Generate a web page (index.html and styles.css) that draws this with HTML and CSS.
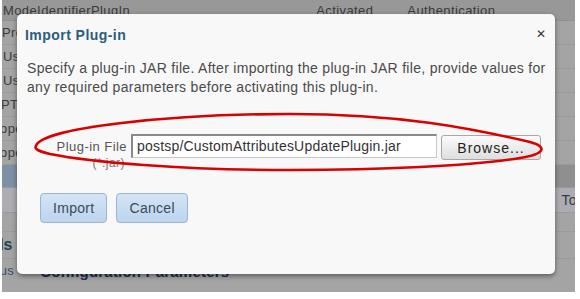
FILE: index.html
```html
<!DOCTYPE html>
<html>
<head>
<meta charset="utf-8">
<link rel="stylesheet" href="styles.css">
</head>
<body>
<div class="screen">
  <div class="page">
    <div class="row head">
      <span class="c1">ModeIdentifierPlugIn</span>
      <span class="c2">Activated</span>
      <span class="c3">Authentication</span>
    </div>
    <div class="row"><span class="c1 in1">Properties</span></div>
    <div class="row"><span class="c1 in2">Users</span></div>
    <div class="row"><span class="c1 in2">Users</span></div>
    <div class="row"><span class="c1 in0">PTS</span></div>
    <div class="row"><span class="c1 neg">operations</span></div>
    <div class="row"><span class="c1 neg">operations</span></div>
    <div class="row band"><span class="blue"></span></div>
    <div class="row tall"><span class="cr">To</span></div>
    <div class="row gap"></div>
    <div class="row sect"><span class="c1 bold">Details</span></div>
    <div class="row last"><span class="c1 status">Status</span><span class="cfg">Configuration Parameters</span></div>
  </div>

  <div class="dialog">
    <div class="dhead">
      <span class="title">Import Plug-in</span>
      <span class="close">&#x2715;</span>
    </div>
    <p class="desc">Specify a plug-in JAR file. After importing the plug-in JAR file, provide values for any required parameters before activating this plug-in.</p>
    <div class="field">
      <label class="flabel">Plug-in File<span class="sub">(*.jar)</span></label>
      <div class="input">postsp/CustomAttributesUpdatePlugin.jar</div>
      <div class="browse">Browse...</div>
    </div>
    <div class="actions">
      <div class="btn">Import</div>
      <div class="btn">Cancel</div>
    </div>
  </div>

  <svg class="mark" width="575" height="293" viewBox="0 0 575 293">
    <path d="M 36 146 C 40 128, 170 114, 290 114 C 400 114, 470 128, 530 142 C 548 147, 545 154, 520 158 C 470 166, 380 170, 290 170 C 180 170, 90 162, 50 154 C 38 151, 34 149, 36 146 Z" fill="none" stroke="#d90000" stroke-width="2.6"/>
  </svg>
</div>
</body>
</html>
```

FILE: styles.css
```css
html, body {
  margin: 0;
  padding: 0;
  background: #ffffff;
}
body {
  font-family: "Liberation Sans", Arial, sans-serif;
  width: 580px;
  height: 299px;
  overflow: hidden;
}
.screen {
  position: relative;
  width: 573px;
  height: 292px;
  margin-left: 2px;
  background: #a4a4a4;
  overflow: hidden;
}
.page {
  display: flex;
  flex-direction: column;
}
.row {
  height: 23px;
  display: flex;
  align-items: center;
  position: relative;
  border-bottom: 1px solid #9a9a9a;
  font-size: 13px;
  letter-spacing: 0.4px;
  color: #3a3a3a;
  white-space: nowrap;
}
.row.head {
  height: 20px;
  background: #989898;
  border-bottom: 1px solid #8f8f8f;
}
.c1 { padding-left: 1px; }
.in1 { padding-left: 0; }
.in2 { padding-left: 1px; }
.in0 { margin-left: -2px; }
.neg { margin-left: -3px; }
.c2 { margin-left: 186px; }
.c3 { margin-left: 34px; }
.band {
  height: 22px;
  background: #8f8f8f;
}
.band .blue {
  width: 40px;
  height: 100%;
  background: #7d90a6;
}
.tall {
  height: 24px;
  background: #acacb2;
  justify-content: flex-end;
}
.cr {
  margin-right: -2px;
  font-size: 14px;
}
.gap { height: 18px; border-bottom: none; }
.sect {
  height: 26px;
  border-top: 1px solid #9a9a9a;
}
.bold {
  font-weight: bold;
  font-size: 16px;
  color: #2a4350;
  margin-left: -43px;
  letter-spacing: 0;
}
.last {
  height: 26px;
  border-bottom: none;
  align-items: flex-start;
  padding-top: 4px;
}
.status {
  color: #3a4a6a;
  margin-left: -28px;
}
.cfg {
  margin-left: 26px;
  font-weight: bold;
  font-size: 15px;
  letter-spacing: 0.2px;
  color: #1d2b50;
}

.dialog {
  position: absolute;
  left: 15px;
  top: 14px;
  width: 538px;
  height: 260px;
  box-sizing: border-box;
  background: #f8f8f8;
  border-radius: 5px;
  box-shadow: 0 2px 5px rgba(0,0,0,0.45);
  padding: 0 4px 0 10px;
}
.dhead {
  display: flex;
  justify-content: space-between;
  align-items: center;
  height: 40px;
  margin-left: -2px;
  margin-right: 6px;
}
.title {
  font-weight: bold;
  font-size: 14px;
  letter-spacing: 0.45px;
  color: #2b5d7c;
  margin-top: 2px;
}
.close {
  font-size: 12px;
  color: #333;
  margin-right: -1px;
  margin-top: 0px;
  font-family: "DejaVu Sans", sans-serif;
}
.desc {
  margin: 5px 0 0 0;
  font-size: 14px;
  letter-spacing: 0.3px;
  line-height: 19px;
  color: #4a4a4a;
}
.field {
  display: flex;
  align-items: flex-start;
  margin-top: 37px;
  height: 37px;
}
.flabel {
  width: 74px;
  margin-left: 26px;
  font-size: 13px;
  letter-spacing: 0.45px;
  color: #555;
  line-height: 17px;
  margin-top: 4px;
  display: flex;
  flex-direction: column;
  align-items: flex-end;
  text-align: right;
}
.sub {
  color: #777;
  font-size: 12px;
  margin-right: 2px;
}
.input {
  margin-left: 4px;
  width: 306px;
  height: 24px;
  box-sizing: border-box;
  background: #fff;
  border: 1px solid #c8c8c8;
  border-top: 2px solid #8a8a8a;
  border-left: 2px solid #8a8a8a;
  font-size: 14px;
  letter-spacing: 0.2px;
  color: #333;
  padding: 2px 0 0 4px;
  white-space: nowrap;
  overflow: hidden;
}
.browse {
  margin-left: 4px;
  width: 100px;
  height: 25px;
  box-sizing: border-box;
  border: 1px solid #a8a8a8;
  border-radius: 3px;
  background: linear-gradient(#fbfbfb, #dedede);
  font-size: 14px;
  letter-spacing: 1px;
  color: #222;
  display: flex;
  align-items: center;
  justify-content: center;
  margin-top: 1px;
}
.actions {
  display: flex;
  gap: 9px;
  margin-top: 22px;
  margin-left: 13px;
}
.btn {
  height: 30px;
  box-sizing: border-box;
  padding: 0 12px;
  border: 1px solid #9ab6d3;
  border-radius: 4px;
  background: linear-gradient(#d4e4f5, #bcd4ee);
  font-size: 14px;
  letter-spacing: 0.3px;
  color: #3d4a58;
  display: flex;
  align-items: center;
}
.mark {
  position: absolute;
  left: -2px;
  top: 0;
  pointer-events: none;
}
```
